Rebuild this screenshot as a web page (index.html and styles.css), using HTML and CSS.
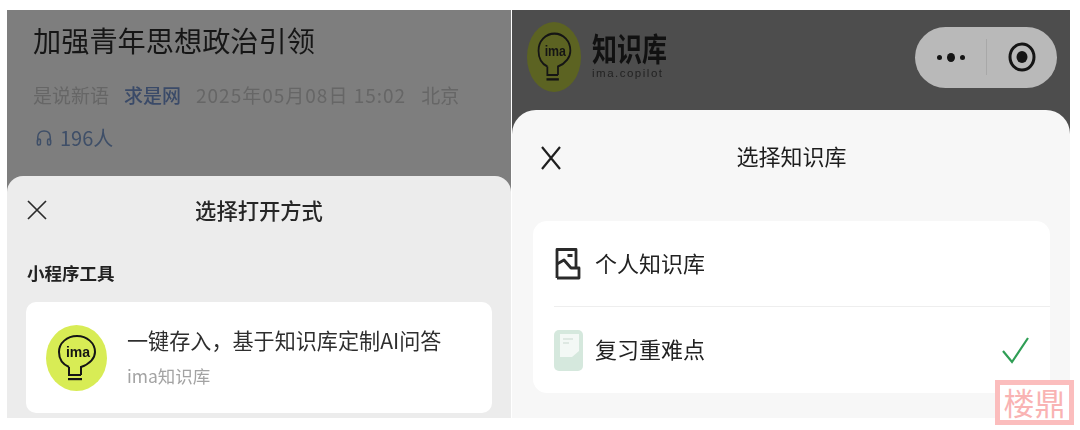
FILE: index.html
```html
<!DOCTYPE html>
<html lang="zh-CN">
<head>
    <meta charset="UTF-8">
    <title>选择打开方式</title>
    <link rel="stylesheet" href="styles.css">
</head>
<body>

<div class="shots">
    <section class="shot shot-left">
        <div class="article">
            <h1>加强青年思想政治引领</h1>
            <div class="meta">
                <span>是说新语</span>
                <span class="source">求是网</span>
                <span class="date">2025年05月08日 15:02</span>
                <span>北京</span>
            </div>
            <div class="listen">
                <svg width="16" height="18" viewBox="0 0 18 20" fill="none" stroke="#3f4f68" stroke-width="1.7">
                    <path d="M2 14 V9 C2 4.5 5 2 9 2 C13 2 16 4.5 16 9 V14"/>
                    <rect x="1.5" y="11" width="3.5" height="7" rx="1.7"/>
                    <rect x="13" y="11" width="3.5" height="7" rx="1.7"/>
                </svg>
                <span>196人</span>
            </div>
        </div>
        <div class="sheet sheet-open">
            <div class="sheet-head">
                <svg class="close" width="20" height="20" viewBox="0 0 20 20" stroke="#2b2b2b" stroke-width="1.7"><path d="M1 1 L19 19 M19 1 L1 19"/></svg>
                <span class="sheet-title">选择打开方式</span>
            </div>
            <div class="group-label">小程序工具</div>
            <div class="tool-card">
                <div class="logo logo-bright">
                    <svg width="61" height="66" viewBox="0 0 61 66" preserveAspectRatio="none">
                        <path d="M23 42 C16 39 13 33 13 27 C13 18 21 11 31 11 C41 11 49 18 49 27 C49 33 44 39 35 42 V50 M23 42 V50 H35" fill="none" stroke="currentColor" stroke-width="2"/>
                        <rect x="22" y="53" width="14" height="2.2" fill="currentColor"/>
                        <text x="32" y="32" text-anchor="middle" class="bulb-text">ima</text>
                    </svg>
                </div>
                <div class="tool-text">
                    <div class="tool-name">一键存入，基于知识库定制AI问答</div>
                    <div class="tool-sub">ima知识库</div>
                </div>
            </div>
        </div>
    </section>

    <section class="shot shot-right">
        <div class="topbar">
            <div class="logo logo-dim">
                <svg width="54" height="70" viewBox="0 0 61 66" preserveAspectRatio="none">
                    <path d="M23 42 C16 39 13 33 13 27 C13 18 21 11 31 11 C41 11 49 18 49 27 C49 33 44 39 35 42 V50 M23 42 V50 H35" fill="none" stroke="currentColor" stroke-width="2"/>
                    <rect x="22" y="53" width="14" height="2.2" fill="currentColor"/>
                    <text x="32" y="32" text-anchor="middle" class="bulb-text">ima</text>
                </svg>
            </div>
            <div class="brand">
                <div class="brand-name">知识库</div>
                <div class="brand-sub">ima.copilot</div>
            </div>
            <div class="capsule">
                <div class="dots"><i></i><i class="big"></i><i></i></div>
                <div class="capsule-line"></div>
                <svg class="target" width="28" height="30" viewBox="0 0 28 30">
                    <ellipse cx="14" cy="15" rx="12" ry="13" fill="none" stroke="#151515" stroke-width="3"/>
                    <ellipse cx="14" cy="15" rx="5.5" ry="6" fill="#151515"/>
                </svg>
            </div>
        </div>
        <div class="sheet sheet-pick">
            <div class="sheet-head pick-head">
                <svg class="close" width="20" height="24" viewBox="0 0 20 24" stroke="#1f1f1f" stroke-width="2.2"><path d="M1 1 L19 23 M19 1 L1 23"/></svg>
                <span class="sheet-title pick-title">选择知识库</span>
            </div>
            <div class="kb-card">
                <div class="kb-row">
                    <svg class="kb-icon" width="26" height="32" viewBox="0 0 26 32" fill="none" stroke="#2a2a2a" stroke-width="2.8" stroke-linejoin="round">
                        <path d="M2 30 V1.5 H21 V20"/>
                        <path d="M2 16 L9 12 L16 20 H24 V30 H2"/>
                        <rect x="12.5" y="6" width="5" height="3" fill="#2a2a2a" stroke="none"/>
                    </svg>
                    <span class="kb-name">个人知识库</span>
                </div>
                <div class="kb-row kb-row-second">
                    <svg class="note-icon" width="29" height="41" viewBox="0 0 29 41">
                        <rect width="29" height="41" rx="5" fill="#d5e8dd"/>
                        <path d="M6 4 H25 V21 L18 27 H6 Z" fill="#f3f8f5"/>
                        <path d="M9 9 H19 M9 13 H15" stroke="#c9d8cf" stroke-width="1"/>
                    </svg>
                    <span class="kb-name">复习重难点</span>
                    <svg class="check" width="27" height="27" viewBox="0 0 27 27" fill="none" stroke="#2f9e55" stroke-width="2.2"><path d="M1 14 L10 25 L26 1"/></svg>
                </div>
            </div>
        </div>
    </section>
</div>

<div class="stamp">楼鼎</div>

</body>
</html>
```

FILE: styles.css
```css
body {
    margin: 0;
    background: #fff;
    font-family: "Noto Sans CJK SC", "Noto Sans", sans-serif;
    overflow: hidden;
}
.shots {
    display: flex;
    gap: 1px;
    padding: 10px 0 0 7px;
}
.shot {
    display: flex;
    flex-direction: column;
    justify-content: space-between;
    height: 408px;
    overflow: hidden;
    filter: blur(0.45px);
}
.shot-left {
    width: 504px;
    background: #7e7e7e;
}
.shot-right {
    width: 558px;
    background: #4d4d4d;
}

/* left: article behind the sheet */
.article {
    padding: 10px 0 0 26px;
}
h1 {
    margin: 0;
    font-size: 28.2px;
    font-weight: 400;
    line-height: 40px;
    color: #161616;
}
.meta {
    display: flex;
    gap: 15px;
    margin-top: 21px;
    font-size: 19px;
    line-height: 28px;
    color: #666;
}
.date {
    letter-spacing: 1px;
}
.source {
    font-weight: 500;
    color: #3a4a68;
}
.listen {
    display: flex;
    align-items: center;
    gap: 8px;
    margin: 15px 0 0 3px;
    font-size: 20px;
    line-height: 28px;
    color: #3f4f68;
}

.sheet {
    border-radius: 16px 16px 0 0;
}
.sheet-open {
    height: 242px;
    box-sizing: border-box;
    padding: 0 19px 0 19px;
    background: #ececec;
}
.sheet-head {
    display: flex;
    align-items: center;
    justify-content: center;
    position: relative;
    height: 66px;
}
.close {
    position: absolute;
    left: 1px;
    top: 24px;
}
.sheet-title {
    font-size: 21.3px;
    font-weight: 500;
    color: #262626;
}
.group-label {
    margin: 17px 0 0 1px;
    font-size: 17.5px;
    line-height: 28px;
    font-weight: 700;
    color: #222;
}
.tool-card {
    display: flex;
    align-items: center;
    gap: 20px;
    height: 111px;
    margin-top: 15px;
    padding-left: 20px;
    background: #fff;
    border-radius: 10px;
}
.logo {
    flex: none;
    border-radius: 50%;
    color: #151515;
}
.logo svg {
    display: block;
}
.logo-bright {
    background: #d8ec55;
}
.logo-dim {
    background: #5c6322;
}
.bulb-text {
    font-family: "Liberation Sans", sans-serif;
    font-size: 14px;
    font-weight: 700;
    fill: currentColor;
}
.tool-text {
    padding-bottom: 2px;
}
.tool-name {
    font-size: 21.1px;
    line-height: 30px;
    color: #2e2e2e;
}
.tool-sub {
    margin-top: 8px;
    font-size: 17.5px;
    line-height: 26px;
    color: #a3a3a3;
}

/* right: mini program */
.topbar {
    display: flex;
    align-items: center;
    height: 100px;
    padding: 0 13px 6px 15px;
    box-sizing: border-box;
}
.brand {
    margin-left: 11px;
    color: #111;
}
.brand-name {
    font-size: 25px;
    font-weight: 700;
    line-height: 32px;
    transform: scaleY(1.25);
    transform-origin: left bottom;
}
.brand-sub {
    font-family: "Liberation Sans", sans-serif;
    font-size: 11.5px;
    letter-spacing: 1.5px;
    line-height: 12px;
    color: #222;
}
.capsule {
    display: flex;
    align-items: center;
    width: 142px;
    height: 61px;
    margin-left: auto;
    background: #b9b9b9;
    border-radius: 31px;
}
.dots {
    display: flex;
    align-items: center;
    justify-content: center;
    gap: 5px;
    width: 71px;
}
.dots i {
    width: 5px;
    height: 5px;
    border-radius: 50%;
    background: #151515;
}
.dots .big {
    width: 8px;
    height: 9px;
}
.capsule-line {
    width: 1px;
    height: 36px;
    background: #a8a8a8;
}
.target {
    margin-left: 21px;
}
.sheet-pick {
    flex: 1;
    padding: 0 20px 0 21px;
    background: #f7f7f7;
    border-radius: 24px 24px 0 0;
}
.pick-head {
    height: 111px;
    align-items: flex-start;
}
.pick-head .close {
    left: 8px;
    top: 36px;
}
.pick-title {
    margin-top: 30px;
    font-size: 22px;
    line-height: 30px;
    font-weight: 400;
    color: #1d1d1d;
}
.kb-card {
    height: 172px;
    padding-left: 21px;
    background: #fff;
    border-radius: 14px;
}
.kb-row {
    display: flex;
    align-items: center;
    gap: 14px;
    height: 86px;
    box-sizing: border-box;
    font-size: 22px;
    color: #222;
    border-bottom: 1px solid #eee;
}
.kb-name {
    padding-bottom: 4px;
}
.kb-row-second {
    border-bottom: none;
    gap: 12px;
}
.kb-icon {
    margin-left: 1px;
}
.check {
    margin-left: auto;
    margin-right: 21px;
}

.stamp {
    position: absolute;
    left: 995px;
    top: 380px;
    width: 79px;
    height: 45px;
    box-sizing: border-box;
    border: 5px solid #fbbdbd;
    background: #fff;
    color: #f9b3b3;
    font-size: 31px;
    line-height: 34px;
    font-weight: 400;
    text-align: center;
    overflow: hidden;
}
```
